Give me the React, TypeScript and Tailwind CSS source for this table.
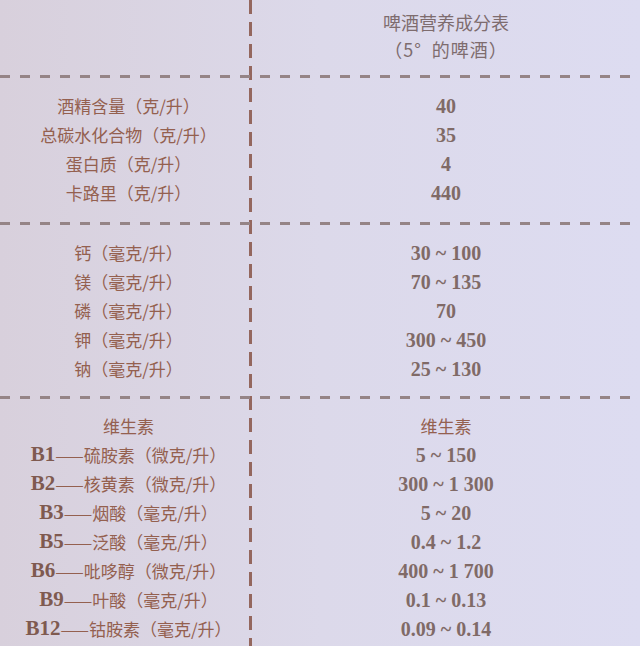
const sans = "font-['Noto_Sans_CJK_SC','Noto_Sans',sans-serif]"
const serif = "font-['Liberation_Serif','Noto_Sans_CJK_SC',serif]"

const basics = [
  ['酒精含量（克/升）', '40'],
  ['总碳水化合物（克/升）', '35'],
  ['蛋白质（克/升）', '4'],
  ['卡路里（克/升）', '440'],
]

const minerals = [
  ['钙（毫克/升）', '30 ~ 100'],
  ['镁（毫克/升）', '70 ~ 135'],
  ['磷（毫克/升）', '70'],
  ['钾（毫克/升）', '300 ~ 450'],
  ['钠（毫克/升）', '25 ~ 130'],
]

const vitamins = [
  ['B1', '硫胺素（微克/升）', '5 ~ 150'],
  ['B2', '核黄素（微克/升）', '300 ~ 1 300'],
  ['B3', '烟酸（毫克/升）', '5 ~ 20'],
  ['B5', '泛酸（毫克/升）', '0.4 ~ 1.2'],
  ['B6', '吡哆醇（微克/升）', '400 ~ 1 700'],
  ['B9', '叶酸（毫克/升）', '0.1 ~ 0.13'],
  ['B12', '钴胺素（毫克/升）', '0.09 ~ 0.14'],
]

const Label = ({ children }: { children: React.ReactNode }) => (
  <div className={`h-[29px] flex items-center justify-center text-[17px] text-[#94604f] ${sans}`}>
    {children}
  </div>
)

const Value = ({ children }: { children: React.ReactNode }) => (
  <div className={`h-[29px] flex items-center justify-center text-[20px] font-bold text-[#806a67] ${serif}`}>
    {children}
  </div>
)

const Dash = ({ row }: { row: string }) => (
  <div
    className={`${row} col-span-full h-[3px] bg-[repeating-linear-gradient(90deg,#958486_0_10px,transparent_10px_20px)]`}
  />
)

export default function App() {
  return (
    <div className="w-[640px] h-[646px] overflow-hidden bg-gradient-to-r from-[#d8d0dc] via-[#dcd9ea] to-[#dddcf1]">
      <div className="grid h-full grid-cols-[249px_3px_1fr] grid-rows-[75px_3px_144px_3px_171px_3px_1fr]">
        {/* vertical divider */}
        <div className="col-start-2 row-span-full bg-[repeating-linear-gradient(180deg,#94675e_0_14px,transparent_14px_22px)]" />

        {/* header */}
        <div className={`col-start-3 row-start-1 pt-[9px] flex flex-col items-center text-[18px] leading-[27px] text-[#7e6c6e] ${sans}`}>
          <span>啤酒营养成分表</span>
          <span className="tracking-[1px]">（5°&nbsp;&nbsp;的啤酒）</span>
        </div>

        <Dash row="row-start-2" />

        <div className="col-start-1 row-start-3 pl-2 pt-[13px]">
          {basics.map(([l]) => <Label key={l}>{l}</Label>)}
        </div>
        <div className="col-start-3 row-start-3 pt-[13px]">
          {basics.map(([l, v]) => <Value key={l}>{v}</Value>)}
        </div>

        <Dash row="row-start-4" />

        <div className="col-start-1 row-start-5 pl-2 pt-[13px]">
          {minerals.map(([l]) => <Label key={l}>{l}</Label>)}
        </div>
        <div className="col-start-3 row-start-5 pt-[13px]">
          {minerals.map(([l, v]) => <Value key={l}>{v}</Value>)}
        </div>

        <Dash row="row-start-6" />

        <div className="col-start-1 row-start-7 pl-2 pt-[12px]">
          <Label>维生素</Label>
          {vitamins.map(([b, l]) => (
            <Label key={b}>
              <span className={`text-[21px] font-bold text-[#7f5a50] ${serif}`}>{b}</span>
              <span className="text-[17px] tracking-[-4px] pr-1">——</span>
              <span>{l}</span>
            </Label>
          ))}
        </div>
        <div className="col-start-3 row-start-7 pt-[12px]">
          <Label>维生素</Label>
          {vitamins.map(([b, , v]) => <Value key={b}>{v}</Value>)}
        </div>
      </div>
    </div>
  )
}
